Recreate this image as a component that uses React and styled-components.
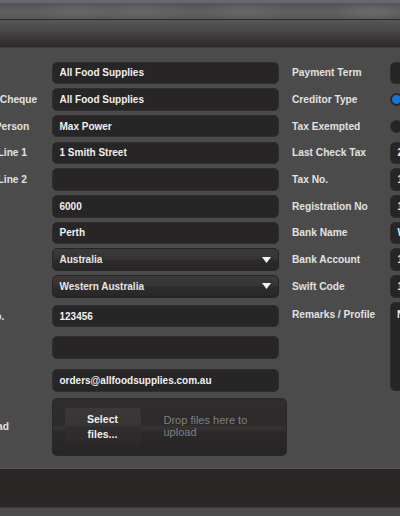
import React from 'react';
import styled, { createGlobalStyle } from 'styled-components';

const GlobalStyle = createGlobalStyle`
  html, body {
    margin: 0;
    padding: 0;
    background: #4b4b4b;
    width: 400px;
    height: 516px;
    overflow: hidden;
  }
  * {
    box-sizing: border-box;
  }
`;

const Page = styled.div`
  width: 400px;
  height: 516px;
  overflow: hidden;
  font-family: 'Liberation Sans', Arial, sans-serif;
  background: #4b4b4b;
`;

const TopStrip = styled.div`
  height: 3.3px;
  background: #6c6470;
`;

const BlurBand = styled.div`
  height: 16px;
  background:
    radial-gradient(ellipse 40px 10px at 75px 9px, rgba(110, 110, 110, 0.6), transparent),
    radial-gradient(ellipse 50px 10px at 140px 9px, rgba(112, 112, 112, 0.5), transparent),
    radial-gradient(ellipse 45px 10px at 245px 9px, rgba(112, 112, 112, 0.5), transparent),
    radial-gradient(ellipse 40px 10px at 370px 9px, rgba(115, 115, 115, 0.6), transparent),
    linear-gradient(180deg, #545454, #5f5f5f 55%, #575757);
`;

const Toolbar = styled.div`
  height: 29px;
  border-top: 1.4px solid #2b2b2b;
  border-bottom: 1px solid #404040;
  background: linear-gradient(180deg, #575757 0%, #4b4a4a 35%, #3a3737 70%, #2d2929 100%);
`;

const Body = styled.div`
  display: flex;
  align-items: flex-start;
  padding: 13.3px 0 12px;
`;

const Column = styled.div`
  display: flex;
  flex-direction: column;
  flex-shrink: 0;
  width: ${p => p.$width}px;
  margin-left: ${p => p.$offset}px;
`;

const Field = styled.div`
  display: flex;
  align-items: ${p => (p.$top ? 'flex-start' : 'center')};
  height: ${p => p.$height || 22.5}px;
  margin-top: ${p => (p.$gap === undefined ? 4.2 : p.$gap)}px;
`;

const Label = styled.label`
  flex-shrink: 0;
  width: ${p => p.$width}px;
  font-size: 10.2px;
  font-weight: bold;
  color: #e2e2e2;
  white-space: nowrap;
  padding-top: ${p => (p.$top ? 7 : 0)}px;
`;

const Input = styled.div`
  flex-shrink: 0;
  width: ${p => p.$width || 227}px;
  height: 100%;
  display: flex;
  align-items: ${p => (p.$multi ? 'flex-start' : 'center')};
  padding: ${p => (p.$multi ? '6px 6px' : '0 6.5px')};
  background: #272525;
  border: 1px solid #2f2d2d;
  border-radius: 5px;
  color: #f0f0f0;
  font-size: 10px;
  font-weight: bold;
  white-space: nowrap;
  overflow: hidden;
`;

const Select = styled(Input)`
  justify-content: space-between;
  padding-right: 7px;
  border: 1px solid #262424;
  background: linear-gradient(180deg, #3c3a3a 0%, #353333 48%, #2d2b2b 52%, #282626 100%);
  color: #e6e6e6;
`;

const Radio = styled.span`
  width: 13px;
  height: 13px;
  border-radius: 50%;
  background: #262525;
  border: 1px solid #2e2c2c;
  display: flex;
  align-items: center;
  justify-content: center;

  &::after {
    content: '';
    width: 9px;
    height: 9px;
    border-radius: 50%;
    background: ${p => (p.$checked ? '#1a74d8' : 'transparent')};
  }
`;

const Upload = styled.div`
  flex-shrink: 0;
  width: 235px;
  height: 100%;
  display: flex;
  align-items: center;
  padding-left: 11.5px;
  gap: 23px;
  border-radius: 5px;
  border: 1px solid #2a2828;
  background: linear-gradient(180deg, #2f2d2d 0%, #2c2a2a 45%, #363434 52%, #2a2828 60%, #262424 100%);
`;

const SelectButton = styled.div`
  width: 76px;
  height: 37px;
  display: flex;
  align-items: center;
  justify-content: center;
  text-align: center;
  line-height: 15px;
  font-size: 10.5px;
  font-weight: bold;
  color: #f0f0f0;
  border-radius: 3px;
  background: linear-gradient(180deg, #3a3838 0%, #363434 48%, #2f2d2d 52%, #2b2929 100%);
`;

const DropText = styled.div`
  font-size: 11px;
  line-height: 11.5px;
  color: #828080;
  width: 90px;
`;

const Footer = styled.div`
  height: 40px;
  border-top: 1px solid #575757;
  border-bottom: 1px solid #3a3a3a;
  background: #2a2626;
`;

const Arrow = () => (
  <svg width="9" height="6" viewBox="0 0 9 6">
    <polygon points="0,0 9,0 4.5,6" fill="#f4f4f4" />
  </svg>
);

const LW = 97;
const RW = 98;

export default function App() {
  return (
    <Page>
      <GlobalStyle />
      <TopStrip />
      <BlurBand />
      <Toolbar />
      <Body>
        <Column $offset={-46} $width={325}>
          <Field $gap={0}>
            <Label $width={98}>Name</Label>
            <Input>All Food Supplies</Input>
          </Field>
          <Field>
            <Label $width={98}>Name on Cheque</Label>
            <Input>All Food Supplies</Input>
          </Field>
          <Field>
            <Label $width={98}>Contact Person</Label>
            <Input>Max Power</Input>
          </Field>
          <Field>
            <Label $width={98}>Address Line 1</Label>
            <Input>1 Smith Street</Input>
          </Field>
          <Field>
            <Label $width={98}>Address Line 2</Label>
            <Input />
          </Field>
          <Field>
            <Label $width={98}>Postcode</Label>
            <Input>6000</Input>
          </Field>
          <Field>
            <Label $width={98}>City</Label>
            <Input>Perth</Input>
          </Field>
          <Field>
            <Label $width={98}>Country</Label>
            <Select>
              Australia
              <Arrow />
            </Select>
          </Field>
          <Field>
            <Label $width={98}>State</Label>
            <Select>
              Western Australia
              <Arrow />
            </Select>
          </Field>
          <Field $gap={7.2}>
            <Label $width={98}>Phone No.</Label>
            <Input>123456</Input>
          </Field>
          <Field $gap={9}>
            <Label $width={98}>Fax</Label>
            <Input />
          </Field>
          <Field $gap={10.5}>
            <Label $width={98}>Email</Label>
            <Input>orders@allfoodsupplies.com.au</Input>
          </Field>
          <Field $gap={5.8} $height={58}>
            <Label $width={98}>File Upload</Label>
            <Upload>
              <SelectButton>
                Select
                <br />
                files...
              </SelectButton>
              <DropText>Drop files here to upload</DropText>
            </Upload>
          </Field>
        </Column>

        <Column $offset={13} $width={300}>
          <Field $gap={0}>
            <Label $width={RW}>Payment Term</Label>
            <Input $width={200} />
          </Field>
          <Field>
            <Label $width={RW}>Creditor Type</Label>
            <Radio $checked />
          </Field>
          <Field>
            <Label $width={RW}>Tax Exempted</Label>
            <Radio />
          </Field>
          <Field>
            <Label $width={RW}>Last Check Tax</Label>
            <Input $width={200}>20/05/2015</Input>
          </Field>
          <Field>
            <Label $width={RW}>Tax No.</Label>
            <Input $width={200}>123456789</Input>
          </Field>
          <Field>
            <Label $width={RW}>Registration No</Label>
            <Input $width={200}>123456</Input>
          </Field>
          <Field>
            <Label $width={RW}>Bank Name</Label>
            <Input $width={200}>Westpac</Input>
          </Field>
          <Field>
            <Label $width={RW}>Bank Account</Label>
            <Input $width={200}>123456789</Input>
          </Field>
          <Field>
            <Label $width={RW}>Swift Code</Label>
            <Input $width={200}>123456</Input>
          </Field>
          <Field $height={89} $top>
            <Label $width={RW} $top>Remarks / Profile</Label>
            <Input $width={200} $multi>None</Input>
          </Field>
        </Column>
      </Body>
      <Footer />
    </Page>
  );
}
